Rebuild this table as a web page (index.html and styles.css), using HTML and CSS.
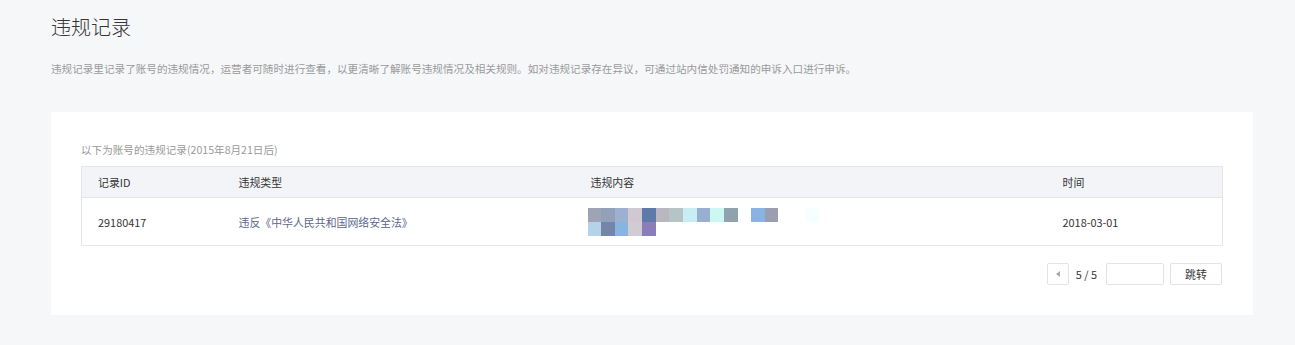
FILE: index.html
```html
<!DOCTYPE html>
<html lang="zh-CN">
<head>
<meta charset="utf-8">
<title>违规记录</title>
<link rel="stylesheet" href="styles.css">
</head>
<body>
<div class="page">
  <h1 class="title">违规记录</h1>
  <p class="desc">违规记录里记录了账号的违规情况，运营者可随时进行查看，以更清晰了解账号违规情况及相关规则。如对违规记录存在异议，可通过站内信处罚通知的申诉入口进行申诉。</p>
  <div class="card">
    <div class="caption">以下为账号的违规记录(2015年8月21日后)</div>
    <table class="records">
      <colgroup>
        <col class="c1"><col class="c2"><col class="c3"><col class="c4">
      </colgroup>
      <thead>
        <tr><th>记录ID</th><th>违规类型</th><th>违规内容</th><th>时间</th></tr>
      </thead>
      <tbody>
        <tr>
          <td>29180417</td>
          <td class="type">违反《中华人民共和国网络安全法》</td>
          <td class="content">
            <div class="mosaic">
              <span style="background:#9ea3b5"></span>
              <span style="background:#93a0ba"></span>
              <span style="background:#9eb0cf"></span>
              <span style="background:#d2c8d2"></span>
              <span style="background:#5e7aab"></span>
              <span style="background:#bab6c2"></span>
              <span style="background:#b5c5c6"></span>
              <span style="background:#c6eef3"></span>
              <span style="background:#97afd0"></span>
              <span style="background:#ccf8f1"></span>
              <span style="background:#91a2af"></span>
              <span style="background:#ffffff"></span>
              <span style="background:#88b3e3"></span>
              <span style="background:#9b9db0"></span>
              <span style="background:#ffffff"></span>
              <span style="background:#ffffff"></span>
              <span style="background:#f5ffff"></span>
              <span style="background:#b5d3e8"></span>
              <span style="background:#7585a8"></span>
              <span style="background:#89b3e0"></span>
              <span style="background:#d3cbd3"></span>
              <span style="background:#8b7db9"></span>
            </div>
          </td>
          <td>2018-03-01</td>
        </tr>
      </tbody>
    </table>
    <div class="pager">
      <button class="prev" type="button"><span class="tri"></span></button>
      <span class="count">5 / 5</span>
      <input class="jump-input" type="text">
      <button class="jump" type="button">跳转</button>
    </div>
  </div>
</div>
</body>
</html>
```

FILE: styles.css
```css
html, body {
  margin: 0;
  padding: 0;
  background: #f6f7f9;
  font-family: "Noto Sans CJK SC", "Noto Sans", sans-serif;
  color: #353535;
}

.page {
  padding: 13px 42px 0 51px;
}

.title {
  margin: 0;
  font-size: 20px;
  line-height: 28px;
  font-weight: 300;
  color: #353535;
}

.desc {
  margin: 20px 0 0;
  font-size: 10.6px;
  line-height: 16px;
  color: #9a9a9a;
}

.card {
  margin-top: 35px;
  background: #fff;
  border-radius: 2px;
  padding: 30px;
}

.caption {
  font-size: 10.6px;
  line-height: 16px;
  color: #9a9a9a;
  margin-bottom: 8px;
}

.records {
  width: 100%;
  border-collapse: collapse;
  table-layout: fixed;
  border: 1px solid #e4e6eb;
  font-size: 10.9px;
}

.c1 { width: 141px; }
.c2 { width: 352px; }
.c3 { width: 472px; }
.c4 { width: auto; }

.records th {
  height: 30px;
  padding: 0 16px;
  background: #f3f4f7;
  text-align: left;
  font-weight: normal;
  color: #353535;
  border-bottom: 1px solid #e4e6eb;
}

.records td {
  height: 47px;
  padding: 0 16px;
  color: #353535;
}

.records td.type {
  color: #5b6790;
}

.records td.content {
  padding-left: 13px;
}

.mosaic {
  display: grid;
  grid-template-columns: repeat(17, 13.65px);
  grid-auto-rows: 14px;
}

.pager {
  margin-top: 17px;
  display: flex;
  justify-content: flex-end;
  align-items: center;
  height: 22px;
  padding-right: 1px;
  font-size: 10.9px;
}

.prev {
  width: 22px;
  height: 22px;
  padding: 0;
  border: 1px solid #e2e3e7;
  border-radius: 2px;
  background: #fff;
  display: flex;
  align-items: center;
  justify-content: center;
}

.tri {
  width: 0;
  height: 0;
  border-top: 3.5px solid transparent;
  border-bottom: 3.5px solid transparent;
  border-right: 4px solid #a9a9a9;
}

.count {
  margin: 0 9px 0 7px;
  color: #353535;
}

.jump-input {
  width: 58px;
  height: 22px;
  box-sizing: border-box;
  border: 1px solid #e2e3e7;
  border-radius: 2px;
  margin: 0;
  padding: 0 6px;
}

.jump {
  margin-left: 6px;
  width: 52px;
  height: 22px;
  box-sizing: border-box;
  border: 1px solid #e2e3e7;
  border-radius: 2px;
  background: #fff;
  font-family: inherit;
  font-size: 10.9px;
  color: #353535;
  padding: 0;
}
```
